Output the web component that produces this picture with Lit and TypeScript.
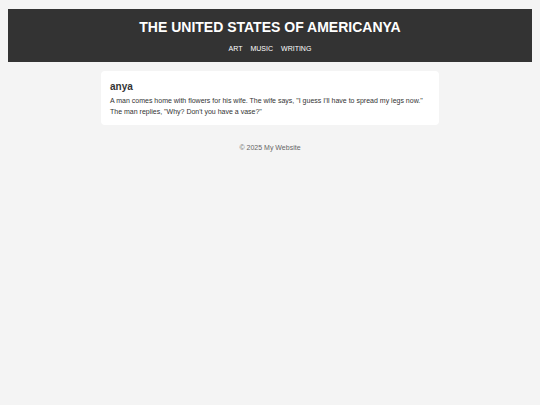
import { LitElement, html, css } from "lit";
import { customElement } from "lit/decorators.js";

interface NavLink {
  label: string;
  href: string;
}

const LINKS: NavLink[] = [
  { label: "ART", href: "#art" },
  { label: "MUSIC", href: "#music" },
  { label: "WRITING", href: "#writing" },
];

@customElement("app-root")
export class AppRoot extends LitElement {
  static styles = css`
    :host {
      display: block;
      box-sizing: border-box;
      min-height: 100vh;
      padding: 9px 8px;
      background: #f4f4f4;
      color: #333;
      font-family: Arial, "Liberation Sans", sans-serif;
      font-size: 7px;
      line-height: 11px;
    }
    .header {
      padding: 7px 8px 8px;
      background: #333;
      color: #fff;
      text-align: center;
    }
    .title {
      margin: 0;
      font-size: 14px;
      line-height: 22px;
    }
    .nav {
      display: flex;
      justify-content: center;
      gap: 8px;
      margin-top: 5px;
    }
    .link {
      color: #fff;
      text-decoration: none;
    }
    .card {
      box-sizing: border-box;
      width: 100%;
      max-width: 338px;
      margin: 9px auto;
      padding: 8px 9px;
      border-radius: 4px;
      background: #fff;
    }
    .heading {
      margin: 0;
      font-size: 10px;
      line-height: 16px;
    }
    .text {
      margin: 0;
    }
    .footer {
      padding: 8px;
      color: #666;
      text-align: center;
    }
  `;

  render() {
    return html`
      <header class="header">
        <h1 class="title">THE UNITED STATES OF AMERICANYA</h1>
        <nav class="nav">
          ${LINKS.map((l) => html`<a class="link" href=${l.href}>${l.label}</a>`)}
        </nav>
      </header>
      <main class="card">
        <h2 class="heading">anya</h2>
        <p class="text">
          A man comes home with flowers for his wife. The wife says, "I guess I'll have to spread my legs now."<br />
          The man replies, "Why? Don't you have a vase?"
        </p>
      </main>
      <footer class="footer">© 2025 My Website</footer>
    `;
  }
}
